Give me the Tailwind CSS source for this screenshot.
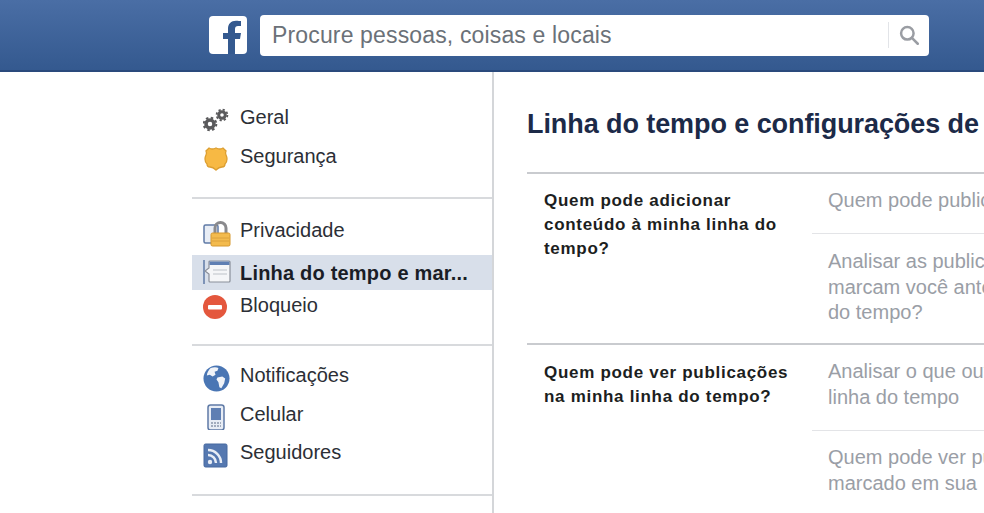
<!DOCTYPE html>
<html lang="pt-BR">
<head>
  <meta charset="UTF-8">
  <title>Linha do tempo e configurações de marcação</title>
  <script src="https://cdn.jsdelivr.net/npm/@tailwindcss/browser@4"></script>
</head>
<body class="bg-white overflow-hidden font-['Liberation_Sans',Arial,sans-serif]">
  <div class="w-[984px] h-[513px] overflow-hidden flex flex-col">

    <!-- top bar -->
    <header class="h-[72px] shrink-0 bg-gradient-to-b from-[#4a6ea5] to-[#34598f] border-b-2 border-[#2a4a7c] flex items-center pl-[209px] gap-[13px]">
      <div class="w-[38px] h-[38px] bg-white rounded-[4px] overflow-hidden">
        <svg viewBox="0 0 38 38" class="w-full h-full"><path fill="#34598f" d="M26 38V23h5l1-6h-6v-4c0-2 1-3 3-3h3V5c-1 0-3-.3-5-.3-5 0-8 3-8 8V17h-5v6h5v15z"/></svg>
      </div>
      <div class="w-[669px] h-[41px] bg-white rounded-[4px] flex items-center pl-3 pr-[10px] text-[23px] tracking-[0.15px] text-[#6b7178]">
        <span class="flex-1 whitespace-nowrap">Procure pessoas, coisas e locais</span>
        <div class="w-px h-[26px] bg-[#e2e4e8] mr-[10px]"></div>
        <svg viewBox="0 0 24 24" class="w-[20px] h-[20px]" fill="none" stroke="#9a9da3" stroke-width="3"><circle cx="10" cy="10" r="7.500"/><path d="M15.500 15.500l7 7" stroke-linecap="round"/></svg>
      </div>
    </header>

    <div class="flex flex-1 min-h-0 pl-[192px]">
      <!-- sidebar -->
      <nav class="w-[302px] shrink-0 border-r-2 border-[#d4d6d9] text-[20px] text-[#2c2f36] pt-[25px]">
        <ul class="pb-[22px] border-b-2 border-[#d8dadd]">
          <li class="h-[39px] flex items-center pl-[11px] gap-[11px]">
            <svg viewBox="0 0 26 24" class="w-[26px] h-[24px] shrink-0 translate-y-[3px]">
              <g fill="none" stroke="#5a5a5c">
                <circle cx="7" cy="16" r="4" stroke-width="3.500"/>
                <circle cx="7" cy="16" r="6.300" stroke-width="2" stroke-dasharray="2.500 2.450"/>
                <circle cx="19" cy="7" r="3.300" stroke-width="3"/>
                <circle cx="19" cy="7" r="5.400" stroke-width="1.800" stroke-dasharray="2.200 2.040"/>
              </g>
            </svg>
            <span>Geral</span>
          </li>
          <li class="h-[39px] flex items-center pl-[11px] gap-[11px]">
            <svg viewBox="0 0 26 26" class="w-[26px] h-[26px] shrink-0 translate-y-[3px]"><path fill="#f7b944" stroke="#dc9e30" stroke-width="1.300" d="M6 2q3 2 7 0q4 2 7 0l3 3q-1 2 0 4q1 2 1 4q0 3-2 5q0 3-3 3q-3 0-6 3q-3-3-6-3q-3 0-3-3q-2-2-2-5q0-2 1-4q1-2 0-4z"/></svg>
            <span>Segurança</span>
          </li>
        </ul>
        <ul class="pt-[11px] pb-[24px] border-b-2 border-[#d8dadd]">
          <li class="h-[39px] flex items-center pl-[11px] gap-[11px]">
            <svg viewBox="0 0 28 26" class="w-[28px] h-[26px] shrink-0 -mr-[2px] translate-y-[4px]"><rect x="1" y="4" width="14" height="18" rx="1.500" fill="#e8edf5" stroke="#5f7aa6" stroke-width="1.500"/><path d="M12 12V7a5.500 5.500 0 0 1 11 0v5" fill="none" stroke="#8a8a8d" stroke-width="3"/><rect x="8" y="12" width="19" height="13" rx="1.500" fill="#f3bb4e" stroke="#d5982f"/><path d="M9 17h17M9 20h17" stroke="#dca23d"/></svg>
            <span>Privacidade</span>
          </li>
          <li class="h-[35px] mt-[6px] flex items-center pl-[11px] gap-[11px] bg-[#d8dfea] font-bold tracking-[0.2px] text-[#1a1d26]">
            <svg viewBox="0 0 28 26" class="w-[28px] h-[26px] shrink-0 -mr-[2px] -translate-y-[1px]"><path d="M1 1v24" stroke="#5f7aa6" stroke-width="1.500"/><path d="M7 2h19a1 1 0 0 1 1 1v19a1 1 0 0 1-1 1H7a1 1 0 0 1-1-1v-7l-4-3 4-3V3a1 1 0 0 1 1-1z" fill="#f5f6f8" stroke="#8a8f99" stroke-width="1.200"/><path d="M6.500 2.500h20v3.500h-20z" fill="#5f7fb3"/><path d="M10 11h14M10 15h14" stroke="#d0d3d8" stroke-width="1.500"/></svg>
            <span>Linha do tempo e mar...</span>
          </li>
          <li class="h-[30px] flex items-center pl-[11px] gap-[11px]">
            <svg viewBox="0 0 24 24" class="w-[24px] h-[24px] shrink-0 mr-[2px] translate-y-[2px]"><circle cx="12" cy="12" r="12" fill="#e4573d"/><rect x="5" y="10" width="14" height="4.500" rx="1" fill="#fff"/></svg>
            <span>Bloqueio</span>
          </li>
        </ul>
        <ul class="pt-[10px] pb-[22px] border-b-2 border-[#d8dadd]">
          <li class="h-[38.5px] flex items-center pl-[11px] gap-[11px]">
            <svg viewBox="0 0 28 28" class="w-[27px] h-[27px] shrink-0 -mr-[1px] translate-y-[3px]"><circle cx="14" cy="14" r="13.500" fill="#4a76b4"/><path d="M8 3c3-1 6-1 8 0l-1 3-3 1 1 3-3 2-3-2-3 1c0-3 2-6 4-8zM15 13l5-1 3 2-1 5-3 5-2-1-1-5-2-3z" fill="#f0f3f8"/></svg>
            <span>Notificações</span>
          </li>
          <li class="h-[38.5px] flex items-center pl-[11px] gap-[11px]">
            <svg viewBox="0 0 26 26" class="w-[26px] h-[26px] shrink-0 translate-y-[3px]"><rect x="5" y="1" width="16" height="25" rx="2.500" fill="#e8edf5" stroke="#5f7aa6" stroke-width="1.500"/><rect x="8" y="4" width="10" height="12" fill="#5f7fb3"/><path d="M8 19h10M8 22h10" stroke="#8a97ab" stroke-width="1.500" stroke-dasharray="2 1"/></svg>
            <span>Celular</span>
          </li>
          <li class="h-[38.5px] flex items-center pl-[11px] gap-[11px]">
            <svg viewBox="0 0 26 26" class="w-[26px] h-[26px] shrink-0 translate-y-[3px]"><rect x="1" y="2" width="23" height="23" rx="1.500" fill="#5578b0" stroke="#46689f"/><circle cx="7" cy="20" r="2.200" fill="#e8edf5"/><path d="M5 13a8 8 0 0 1 8 8M5 8a13 13 0 0 1 13 13" fill="none" stroke="#e8edf5" stroke-width="2.500"/></svg>
            <span>Seguidores</span>
          </li>
        </ul>
      </nav>

      <!-- content -->
      <main class="flex-1 min-w-0 overflow-hidden pl-[33px] pt-[36px]">
        <h1 class="text-[27px] leading-[32px] tracking-[-0.08px] font-bold text-[#1c2a48] whitespace-nowrap">Linha do tempo e configurações de marcação</h1>
        <section class="mt-[32px] border-t-2 border-[#c9cbcf] flex h-[171px]">
          <h2 class="w-[285px] shrink-0 pl-[17px] pr-5 pt-[15px] text-[17px] leading-[24px] tracking-[0.7px] font-bold text-[#1c1e21]">Quem pode adicionar conteúdo à minha linha do tempo?</h2>
          <div class="flex-1 text-[20px] leading-[25.5px] text-[#9a9ea6] whitespace-nowrap">
            <p class="h-[60px] pl-4 pt-[14px] border-b border-[#e3e4e7]">Quem pode publicar</p>
            <p class="pl-4 pt-[15px]">Analisar as publicações<br>marcam você antes<br>do tempo?</p>
          </div>
        </section>
        <section class="border-t-2 border-[#c9cbcf] flex">
          <h2 class="w-[285px] shrink-0 pl-[17px] pr-5 pt-[16px] text-[17px] leading-[24px] tracking-[0.7px] font-bold text-[#1c1e21]">Quem pode ver publicações na minha linha do tempo?</h2>
          <div class="flex-1 text-[20px] leading-[25.5px] text-[#9a9ea6] whitespace-nowrap">
            <p class="h-[86px] pl-4 pt-[14px] border-b border-[#e3e4e7]">Analisar o que outros<br>linha do tempo</p>
            <p class="pl-4 pt-[14px]">Quem pode ver publicações<br>marcado em sua</p>
          </div>
        </section>
      </main>
    </div>
  </div>
</body>
</html>
